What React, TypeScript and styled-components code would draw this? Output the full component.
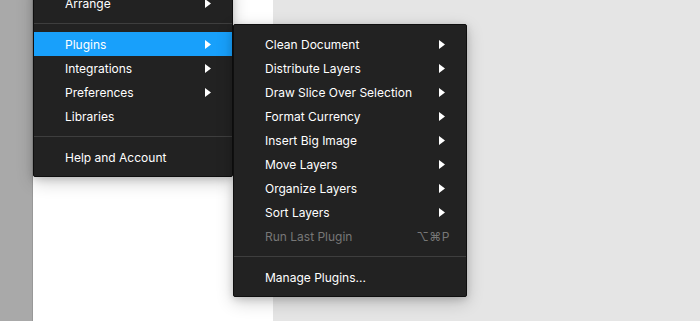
import React from "react";
import styled, { createGlobalStyle, css } from "styled-components";

interface MenuEntry {
  label?: string;
  submenu?: boolean;
  shortcut?: string;
  disabled?: boolean;
  active?: boolean;
  separator?: boolean;
}

const mainItems: MenuEntry[] = [
  { label: "Arrange", submenu: true },
  { separator: true },
  { label: "Plugins", submenu: true, active: true },
  { label: "Integrations", submenu: true },
  { label: "Preferences", submenu: true },
  { label: "Libraries" },
  { separator: true },
  { label: "Help and Account" },
];

const pluginItems: MenuEntry[] = [
  { label: "Clean Document", submenu: true },
  { label: "Distribute Layers", submenu: true },
  { label: "Draw Slice Over Selection", submenu: true },
  { label: "Format Currency", submenu: true },
  { label: "Insert Big Image", submenu: true },
  { label: "Move Layers", submenu: true },
  { label: "Organize Layers", submenu: true },
  { label: "Sort Layers", submenu: true },
  { label: "Run Last Plugin", shortcut: "⌥⌘P", disabled: true },
  { separator: true },
  { label: "Manage Plugins..." },
];

const Caret = () => (
  <CaretIcon width="6" height="9" viewBox="0 0 6 9">
    <path d="M0 0 L6 4.5 L0 9 Z" fill="currentColor" />
  </CaretIcon>
);

const MenuList = ({ items }: { items: MenuEntry[] }) => (
  <>
    {items.map((item, i) =>
      item.separator ? (
        <Separator key={i} />
      ) : (
        <Item key={i} $active={item.active} $disabled={item.disabled}>
          <Label>{item.label}</Label>
          {item.shortcut && <Shortcut>{item.shortcut}</Shortcut>}
          {item.submenu && <Caret />}
        </Item>
      )
    )}
  </>
);

const App = () => {
  return (
    <>
      <GlobalStyle />
      <Page>
        <Sidebar />
        <Canvas />
        <Workspace />
        <MainMenu>
          <MenuList items={mainItems} />
        </MainMenu>
        <SubMenu>
          <MenuList items={pluginItems} />
        </SubMenu>
      </Page>
    </>
  );
};

export default App;

const GlobalStyle = createGlobalStyle`
  html, body {
    margin: 0;
    padding: 0;
  }
  body {
    font-family: Inter, "Noto Sans", "Liberation Sans", sans-serif;
    overflow: hidden;
  }
`;

const Page = styled.div`
  position: relative;
  display: flex;
  width: 700px;
  height: 321px;
  overflow: hidden;
`;

const Sidebar = styled.div`
  width: 32px;
  background: #a9a9a9;
  border-right: 1px solid #989898;
`;

const Canvas = styled.div`
  width: 240px;
  background: #ffffff;
`;

const Workspace = styled.div`
  flex: 1;
  background: #e5e5e5;
`;

const menuBox = css`
  position: absolute;
  box-sizing: border-box;
  padding: 7px 0;
  background: #222222;
  border: 1px solid #0f0f0f;
  border-radius: 2px;
  box-shadow: 0 5px 17px rgba(0, 0, 0, 0.2), 0 2px 7px rgba(0, 0, 0, 0.15);
`;

const MainMenu = styled.div`
  ${menuBox};
  left: 33px;
  top: -17px;
  width: 200px;
`;

const SubMenu = styled.div`
  ${menuBox};
  left: 233px;
  top: 24px;
  width: 234px;
`;

const Item = styled.div<{ $active?: boolean; $disabled?: boolean }>`
  display: flex;
  align-items: center;
  height: 24px;
  padding: 0 16px 0 31px;
  font-size: 12px;
  color: ${({ $disabled }) => ($disabled ? "#777777" : "#ffffff")};
  background: ${({ $active }) => ($active ? "#18a0fb" : "transparent")};
`;

const Label = styled.span`
  flex: 1;
  white-space: nowrap;
`;

const Shortcut = styled.span`
  color: #777777;
  letter-spacing: 0.5px;
`;

const CaretIcon = styled.svg`
  margin-right: 5px;
  display: block;
`;

const Separator = styled.div`
  height: 1px;
  margin: 8px 0;
  background: #3e3e3e;
`;
